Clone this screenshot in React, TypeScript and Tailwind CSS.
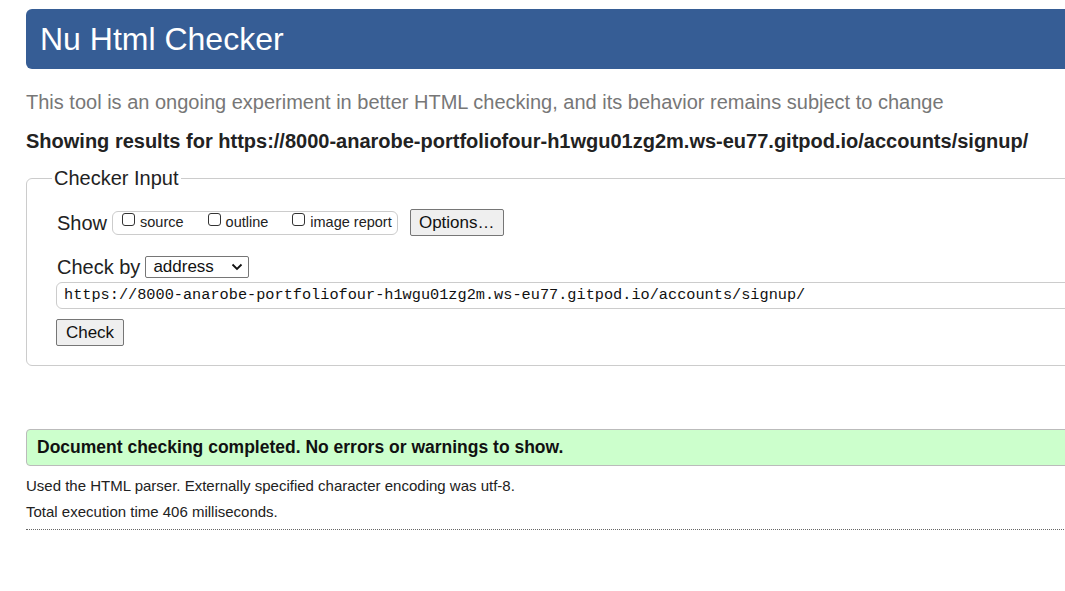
import React from "react";

function Box() {
  return <span className="inline-block w-[13px] h-[13px] border border-[#333] rounded-[3px] bg-white mr-[5px] relative top-[-3px]" />;
}

export default function App() {
  const url = "https://8000-anarobe-portfoliofour-h1wgu01zg2m.ws-eu77.gitpod.io/accounts/signup/";
  return (
    <div className="w-[1065px] h-[591px] overflow-hidden bg-white font-['Liberation_Sans',Arial,sans-serif] text-[#222]">
      <div className="w-[1200px] ml-[26px] pt-[9px]">
        <div className="h-[60px] bg-[#365d95] rounded-l-[6px] flex items-center pl-[14px]">
          <h1 className="text-white text-[32px] leading-none font-normal">Nu Html Checker</h1>
        </div>
        <p className="mt-[22px] text-[20px] leading-[22px] text-[#777]">
          This tool is an ongoing experiment in better HTML checking, and its behavior remains subject to change
        </p>
        <p className="mt-[17px] text-[20px] leading-[22px] font-bold text-[#222]">Showing results for {url}</p>
        <fieldset className="mt-[15px] border border-[#ccc] rounded-l-[6px] pl-[30px] pr-0 pb-[19px] pt-0">
          <legend className="text-[20px] leading-[22px] px-[2px] ml-[-5px] text-[#222]">Checker Input</legend>
          <div className="flex items-center mt-[20px] h-[27px]">
            <span className="text-[20px] leading-[22px]">Show</span>
            <div className="ml-[5px] h-[24px] border border-[#ccc] rounded-[6px] flex items-center pl-[9px] pr-[5px] text-[14.5px] text-[#222]">
              <label className="flex items-center"><Box />source</label>
              <label className="flex items-center ml-[24px]"><Box />outline</label>
              <label className="flex items-center ml-[24px]"><Box />image report</label>
            </div>
            <button className="ml-[12px] h-[27px] w-[94px] bg-[#efefef] border border-[#767676] rounded-[2px] text-[17px] leading-none text-[#111]">Options…</button>
          </div>
          <div className="flex items-center mt-[20px] h-[22px]">
            <span className="text-[20px] leading-[22px]">Check by</span>
            <div className="ml-[5px] w-[104px] h-[22px] border border-[#767676] rounded-[2px] flex items-center justify-between pl-[7px] pr-[5px] text-[17px] text-[#111]">
              <span>address</span>
              <svg width="12" height="8" viewBox="0 0 12 8"><path d="M1.5 1.5 L6 6 L10.5 1.5" fill="none" stroke="#111" strokeWidth="1.8" /></svg>
            </div>
          </div>
          <div className="mt-[4px] ml-[-1px] h-[27px] border border-[#ccc] rounded-l-[6px] flex items-center pl-[7px] font-['Liberation_Mono','DejaVu_Sans_Mono',monospace] text-[15.25px] text-[#111]">
            {url}
          </div>
          <button className="mt-[10px] ml-[-1px] h-[27px] w-[68px] bg-[#efefef] border border-[#767676] rounded-[2px] text-[17px] leading-none text-[#111] block">Check</button>
        </fieldset>
        <div className="mt-[63px] h-[37px] bg-[#ccffcc] border border-[#bbb] rounded-l-[4px] flex items-center pl-[10px]">
          <span className="text-[17.5px] font-bold text-[#111]">Document checking completed. No errors or warnings to show.</span>
        </div>
        <p className="mt-[11px] text-[15px] leading-[18px] text-[#222]">Used the HTML parser. Externally specified character encoding was utf-8.</p>
        <p className="mt-[8px] text-[15px] leading-[18px] text-[#222]">Total execution time 406 milliseconds.</p>
        <div className="mt-[8px] border-t border-dotted border-[#666]" />
      </div>
    </div>
  );
}
